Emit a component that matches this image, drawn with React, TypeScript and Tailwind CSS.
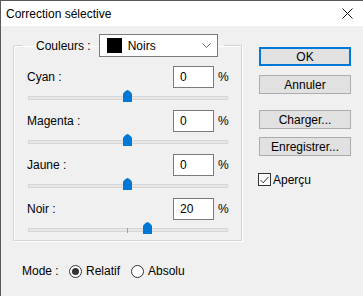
import React from "react";

interface Channel {
  label: string;
  value: number;
}

const channels: Channel[] = [
  { label: "Cyan :", value: 0 },
  { label: "Magenta :", value: 0 },
  { label: "Jaune :", value: 0 },
  { label: "Noir :", value: 20 },
];

const Thumb = () => (
  <svg width="9" height="12" viewBox="0 0 9 12">
    <path d="M0 4 L1 2.5 L3 0.8 L4.5 0 L6 0.8 L8 2.5 L9 4 V12 H0 Z" fill="#0078d7" />
  </svg>
);

const Slider = ({ value, last }: { value: number; last?: boolean }) => (
  <div className={`relative ${last ? "h-[18px]" : "h-[20px]"}`}>
    {/* Track */}
    <div className="absolute left-[1px] top-[6px] w-[200px] h-[4px] bg-[#e7e7e7] border border-[#d6d6d6]" />
    {/* Center tick */}
    <div className="absolute left-[100px] top-[6px] w-[1px] h-[5px] bg-[#a0a0a0]" />
    <div className="absolute top-0" style={{ left: 96 + value }}>
      <Thumb />
    </div>
  </div>
);

const ChannelRow = ({ channel, last }: { channel: Channel; last?: boolean }) => (
  <div className="flex flex-col">
    <div className="flex items-center h-[22px]">
      <span className="flex-1">{channel.label}</span>
      <div className="w-[41px] h-[22px] bg-white border border-[#7a7a7a] flex items-center pl-[6px]">
        {channel.value}
      </div>
      <span className="ml-[4px] w-[11px]">%</span>
    </div>
    <div className="mt-[2px]">
      <Slider value={channel.value} last={last} />
    </div>
  </div>
);

const WinButton = ({ label, primary, className }: { label: string; primary?: boolean; className?: string }) => (
  <button
    className={`w-[92px] h-[19px] bg-[#e1e1e1] flex items-center justify-center leading-none ${
      primary ? "border-2 border-[#0078d7]" : "border border-[#adadad]"
    } ${className ?? ""}`}
  >
    {label}
  </button>
);

const Radio = ({ checked }: { checked?: boolean }) => (
  <span className="w-[13px] h-[13px] rounded-full border border-[#333] bg-white flex items-center justify-center">
    {checked && <span className="w-[7px] h-[7px] rounded-full bg-[#333]" />}
  </span>
);

export default function App() {
  return (
    <div className="w-[363px] h-[296px] bg-[#f0f0f0] border-l border-t border-[#5a5a5a] font-['Liberation_Sans',Arial,sans-serif] text-[12px] text-black overflow-hidden">
      {/* Title bar */}
      <div className="h-[25px] bg-white flex items-center justify-between pl-[5px] pr-[10px]">
        <span className="text-[12px]">Correction sélective</span>
        <svg width="11" height="11" viewBox="0 0 11 11">
          <path d="M0.5 0.5 L10.5 10.5 M10.5 0.5 L0.5 10.5" stroke="#111" strokeWidth="1" />
        </svg>
      </div>

      <div className="flex pt-[8px] pl-[12px]">
        {/* Left column */}
        <div className="flex flex-col w-[229px]">
          <fieldset className="border border-[#d5d5d5] shadow-[1px_1px_0_#fff,inset_1px_1px_0_#fff]">
            <legend className="ml-[8px] pl-[14px] pr-[6px] flex items-center">
              <span className="mr-[8px]">Couleurs :</span>
              <div className="w-[119px] h-[23px] bg-white border border-[#7a7a7a] flex items-center pl-[7px] pr-[6px]">
                <span className="w-[15px] h-[15px] bg-black" />
                <span className="ml-[6px] flex-1">Noirs</span>
                <svg width="9" height="5" viewBox="0 0 9 5">
                  <path d="M0.5 0.5 L4.5 4.5 L8.5 0.5" stroke="#606060" fill="none" />
                </svg>
              </div>
            </legend>
            <div className="flex flex-col pt-[9px] pl-[13px] pr-[12px]">
              {channels.map((c, i) => (
                <ChannelRow key={c.label} channel={c} last={i === channels.length - 1} />
              ))}
            </div>
          </fieldset>

          {/* Mode */}
          <div className="mt-[22px] flex items-center h-[16px] pl-[9px]">
            <span className="w-[47px]">Mode :</span>
            <Radio checked />
            <span className="ml-[4px] w-[45px]">Relatif</span>
            <Radio />
            <span className="ml-[4px]">Absolu</span>
          </div>
        </div>

        {/* Right column */}
        <div className="flex flex-col ml-[17px] pt-[13px]">
          <WinButton label="OK" primary />
          <WinButton label="Annuler" className="mt-[9px]" />
          <WinButton label="Charger..." className="mt-[16px]" />
          <WinButton label="Enregistrer..." className="mt-[8px]" />
          <div className="mt-[17px] flex items-center h-[13px] -ml-[1px]">
            <span className="w-[13px] h-[13px] bg-white border border-[#333] flex items-center justify-center">
              <svg width="9" height="8" viewBox="0 0 9 8">
                <path d="M0.5 4 L3.2 6.8 L8.5 0.8" stroke="#333" fill="none" strokeWidth="1" />
              </svg>
            </span>
            <span className="ml-[2px]">Aperçu</span>
          </div>
        </div>
      </div>
    </div>
  );
}
